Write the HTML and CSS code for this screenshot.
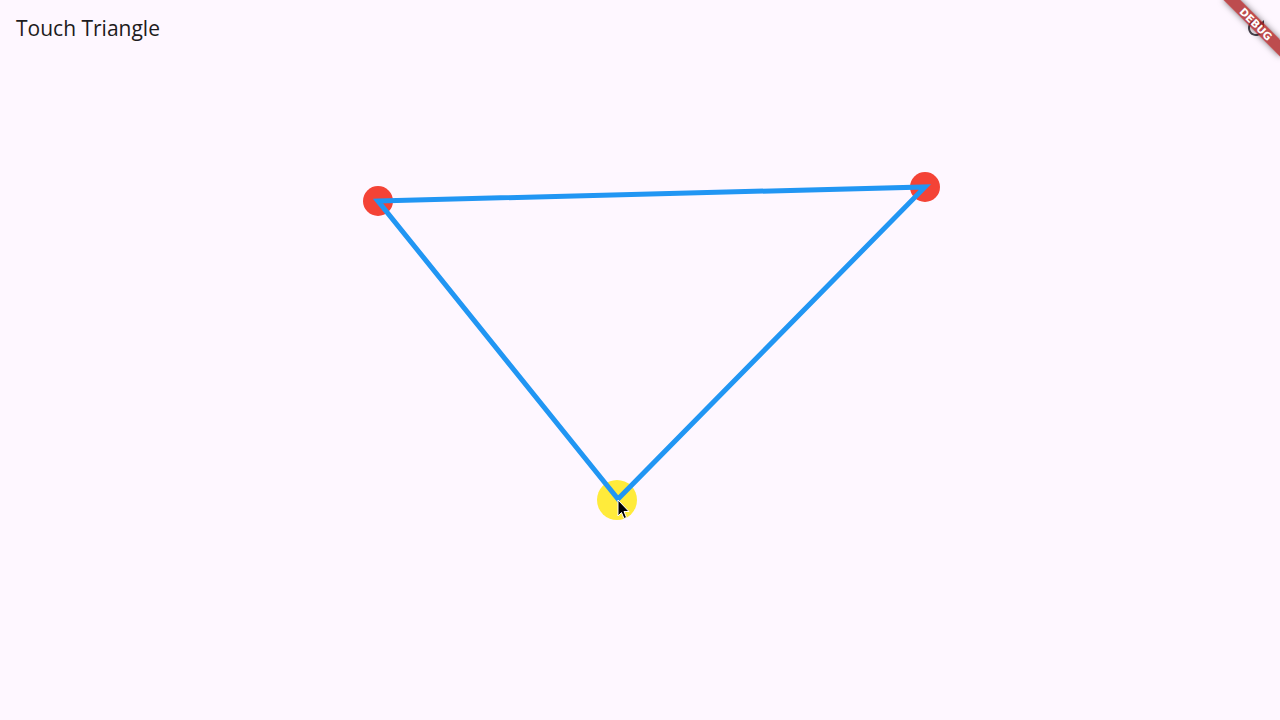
FILE: index.html
```html
<!DOCTYPE html>
<html lang="en">
<head>
<meta charset="utf-8">
<title>Touch Triangle</title>
<link rel="stylesheet" href="styles.css">
</head>
<body>
<div class="app">
  <header class="appbar">
    <h1 class="title">Touch Triangle</h1>
    <button class="action" aria-label="Reset">
      <svg viewBox="0 0 24 24" width="24" height="24"><path fill="#49454f" d="M17.65 6.35C16.2 4.9 14.21 4 12 4c-4.42 0-7.99 3.58-7.99 8s3.57 8 7.99 8c3.73 0 6.84-2.55 7.73-6h-2.08c-.82 2.33-3.04 4-5.65 4-3.31 0-6-2.69-6-6s2.69-6 6-6c1.66 0 3.14.69 4.22 1.78L13 11h7V4l-2.35 2.35z"/></svg>
    </button>
  </header>
  <main class="canvas">
    <svg class="drawing" viewBox="0 56 1280 664" width="1280" height="664">
      <circle cx="378" cy="201" r="15" fill="#f44336"/>
      <circle cx="925" cy="187" r="15" fill="#f44336"/>
      <circle cx="617" cy="500" r="20" fill="#ffeb3b"/>
      <polygon points="378,201 925,187 618,499" fill="none" stroke="#2196f3" stroke-width="5" stroke-linejoin="miter"/>
      <path d="M618 500 L618 516 L621.5 512.5 L624 518.5 L626.5 517.5 L624 511.5 L629 511.5 Z" fill="#000" stroke="#fff" stroke-width="1"/>
    </svg>
  </main>
  <div class="debug-banner">DEBUG</div>
</div>
</body>
</html>
```
FILE: styles.css
```css
html, body {
  margin: 0;
  padding: 0;
  width: 1280px;
  height: 720px;
  overflow: hidden;
  background: #fef7ff;
}
.app {
  position: relative;
  display: flex;
  flex-direction: column;
  width: 1280px;
  height: 720px;
}
.appbar {
  height: 56px;
  display: flex;
  align-items: center;
  justify-content: space-between;
  padding: 0 0 0 16px;
  flex: none;
}
.title {
  margin: 0;
  font-family: "Open Sans", "Noto Sans", sans-serif;
  font-weight: 400;
  font-size: 21px;
  color: #1d1b20;
  line-height: 28px;
}
.action {
  width: 48px;
  height: 48px;
  border: 0;
  background: none;
  padding: 0;
  display: flex;
  align-items: center;
  justify-content: center;
}
.canvas {
  flex: 1;
}
.drawing {
  display: block;
}
.debug-banner {
  position: absolute;
  left: 1216px;
  top: 18px;
  width: 80px;
  height: 12px;
  transform: rotate(45deg);
  background: rgba(170, 28, 28, 0.78);
  box-shadow: 0 0 6px rgba(0, 0, 0, 0.5);
  color: #fff;
  font-family: "DejaVu Sans", sans-serif;
  font-weight: 900;
  font-size: 10.5px;
  line-height: 12px;
  text-align: center;
}
```
